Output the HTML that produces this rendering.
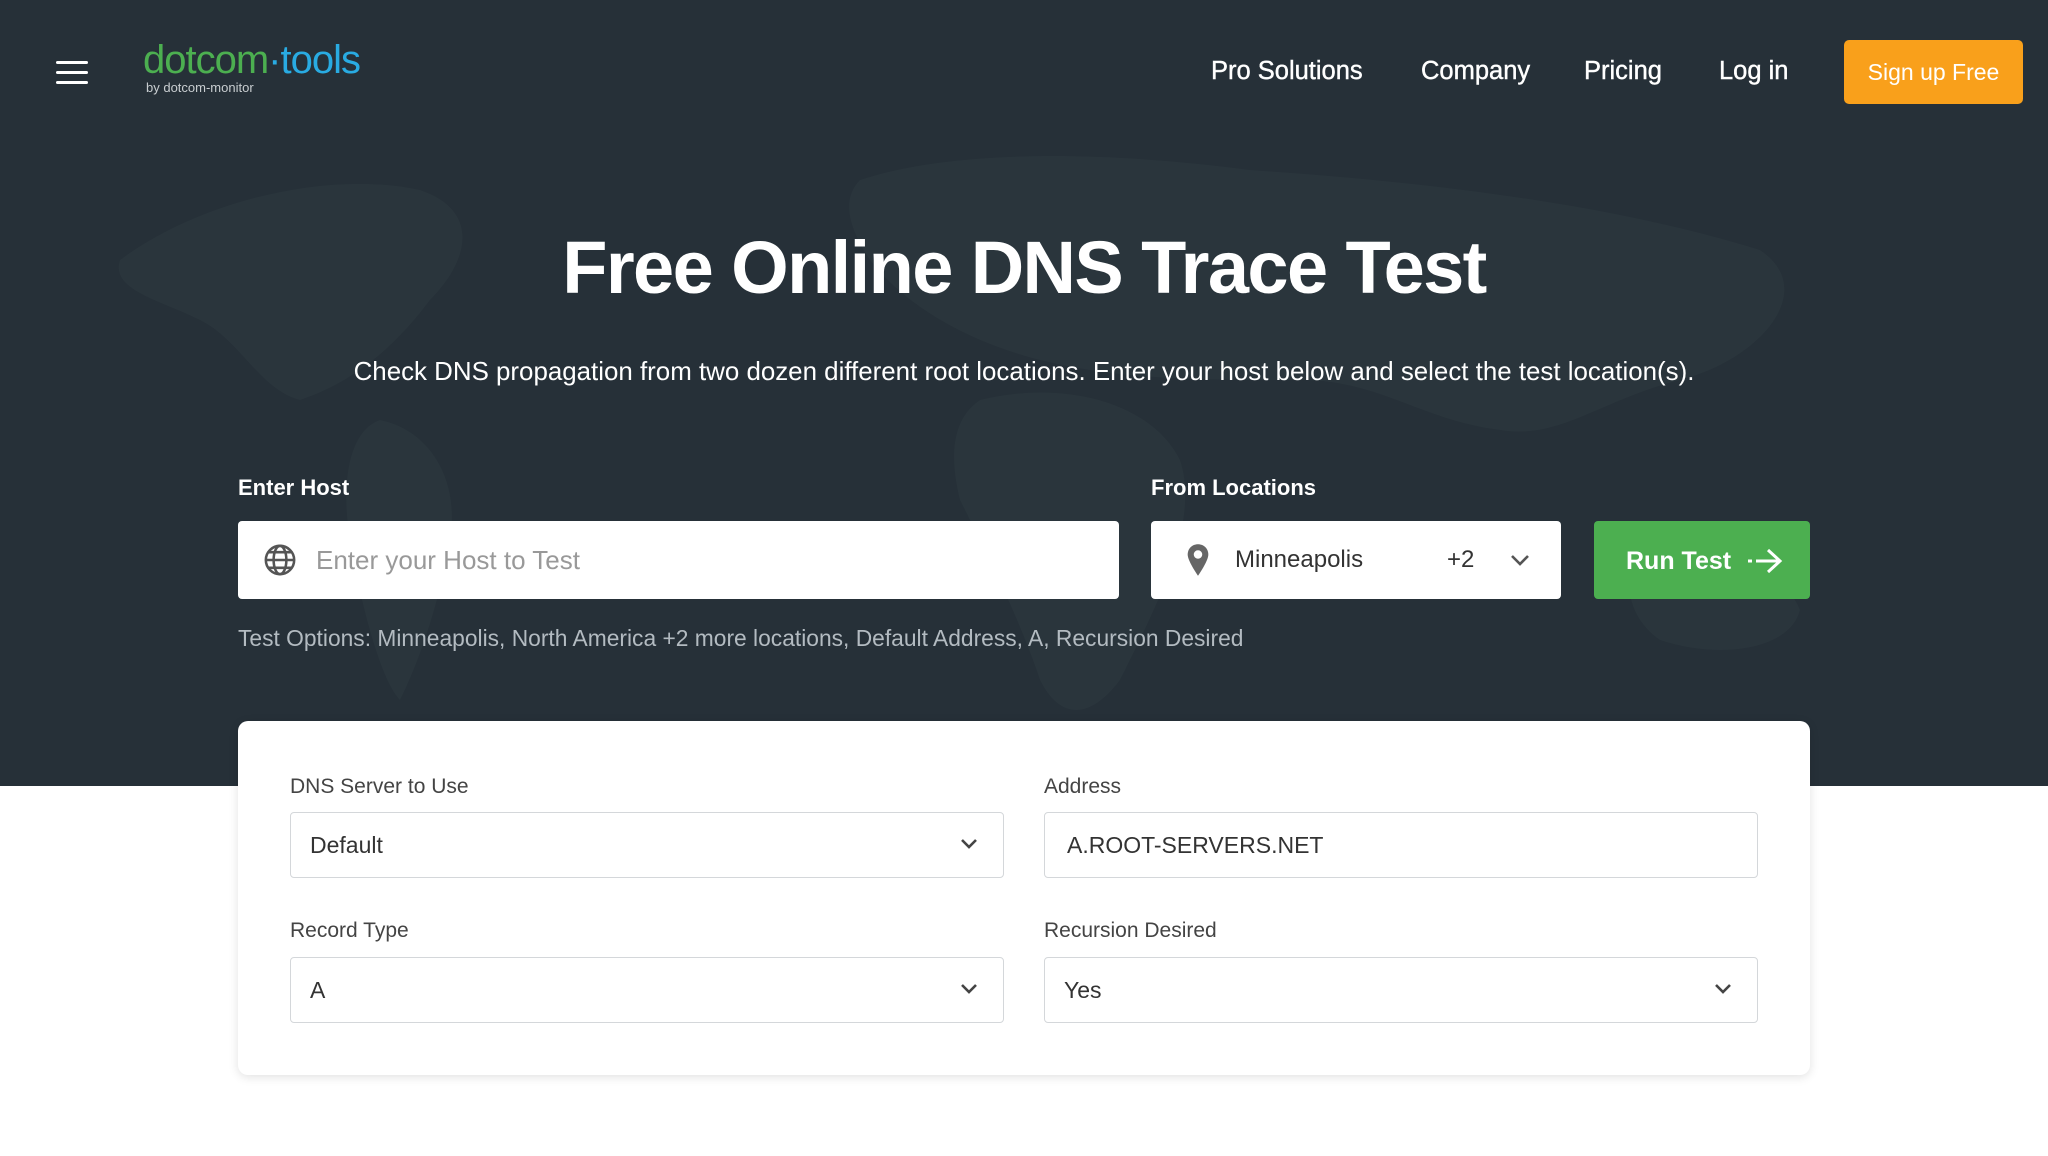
<!DOCTYPE html>
<html><head><meta charset="utf-8"><style>
*{margin:0;padding:0;box-sizing:border-box}
body{width:2048px;height:1156px;overflow:hidden;background:#fff;font-family:"Liberation Sans",Arial,sans-serif;position:relative}
.hero{position:absolute;left:0;top:0;width:2048px;height:786px;background:#263038}
.map{position:absolute;left:0;top:0;width:2048px;height:786px}
.abs{position:absolute}
.nav{color:#fff;font-size:25.5px;top:57px;-webkit-text-stroke:0.4px #fff}
.lbl{color:#fff;font-weight:bold;font-size:22px;top:475px}
.box{background:#fff;border-radius:4px}
.card{left:238px;top:721px;width:1572px;height:354px;background:#fff;border-radius:10px;box-shadow:0 2px 10px rgba(0,0,0,.12)}
.fl{color:#444;font-size:21px}
.fi{position:absolute;border:1px solid #d4d7da;border-radius:4px;height:66px;font-size:23px;color:#333;padding-left:19px;line-height:64px}
.chev{position:absolute;right:24px;top:24px}
</style></head><body>
<div class="hero">
<svg class="map" viewBox="0 0 2048 786">
<g fill="#2a353c">
<path d="M120 260 C200 200 330 170 420 190 C480 210 470 260 430 300 C400 340 360 380 300 400 C260 390 240 340 200 320 C160 300 110 290 120 260Z"/>
<path d="M380 420 C430 430 460 480 450 540 C440 600 420 660 400 700 C380 680 360 600 350 540 C340 480 350 430 380 420Z"/>
<path d="M860 180 C950 150 1100 150 1250 170 C1400 180 1600 200 1760 250 C1820 290 1760 360 1680 380 C1600 400 1560 440 1500 430 C1420 420 1380 380 1300 380 C1200 380 1120 380 1040 360 C960 340 900 300 870 260 C850 230 840 200 860 180Z"/>
<path d="M980 400 C1060 380 1150 400 1180 460 C1200 520 1160 600 1120 680 C1090 720 1060 720 1040 680 C1020 620 990 560 960 500 C950 460 950 420 980 400Z"/>
<path d="M1640 560 C1700 540 1780 560 1800 610 C1790 650 1720 660 1660 640 C1630 620 1620 580 1640 560Z"/>
</g></svg>
<div class="abs" style="left:56px;top:61px;width:32px;height:3px;background:#fff;border-radius:2px"></div>
<div class="abs" style="left:56px;top:71px;width:32px;height:3px;background:#fff;border-radius:2px"></div>
<div class="abs" style="left:56px;top:81px;width:32px;height:3px;background:#fff;border-radius:2px"></div>
<div class="abs" style="left:143px;top:36px;font-size:40px;letter-spacing:-1px;line-height:48px"><span style="color:#4caf50">dotcom</span><span style="color:#29abe2">·tools</span></div>
<div class="abs" style="left:146px;top:80px;font-size:13px;color:#c8cdd0">by dotcom-monitor</div>
<div class="abs nav" style="left:1211px">Pro Solutions</div>
<div class="abs nav" style="left:1421px">Company</div>
<div class="abs nav" style="left:1584px">Pricing</div>
<div class="abs nav" style="left:1719px">Log in</div>
<div class="abs" style="left:1844px;top:40px;width:179px;height:64px;background:#f9a01b;border-radius:5px;color:#fff;font-size:23px;text-align:center;line-height:64px">Sign up Free</div>
<div class="abs" style="left:0;width:2048px;top:222px;text-align:center;color:#fff;font-weight:bold;font-size:74px;letter-spacing:-1.6px;line-height:92px">Free Online DNS Trace Test</div>
<div class="abs" style="left:0;width:2048px;top:358px;text-align:center;color:#fff;font-size:25.9px">Check DNS propagation from two dozen different root locations. Enter your host below and select the test location(s).</div>
<div class="abs lbl" style="left:238px">Enter Host</div>
<div class="abs lbl" style="left:1151px">From Locations</div>
<div class="abs box" style="left:238px;top:521px;width:881px;height:78px">
<svg class="abs" style="left:25px;top:22px" width="34" height="34" viewBox="0 0 24 24" fill="none" stroke="#555" stroke-width="1.8"><circle cx="12" cy="12" r="10"/><ellipse cx="12" cy="12" rx="4.5" ry="10"/><path d="M2 12h20M4 6.5h16M4 17.5h16"/></svg>
<div class="abs" style="left:78px;top:24px;font-size:26px;color:#999">Enter your Host to Test</div></div>
<div class="abs box" style="left:1151px;top:521px;width:410px;height:78px">
<svg class="abs" style="left:34px;top:22px" width="26" height="34" viewBox="0 0 20 28"><path d="M10 1C5 1 1.5 4.8 1.5 9.5 1.5 15 10 27 10 27s8.5-12 8.5-17.5C18.5 4.8 15 1 10 1z" fill="#666"/><circle cx="10" cy="9.5" r="3.5" fill="#fff"/></svg>
<div class="abs" style="left:84px;top:25px;font-size:24px;color:#333">Minneapolis</div>
<div class="abs" style="left:296px;top:25px;font-size:24px;color:#333">+2</div>
<svg class="abs" style="left:358px;top:31px" width="22" height="16" viewBox="0 0 22 16"><path d="M3 4l8 8 8-8" fill="none" stroke="#555" stroke-width="2.6"/></svg></div>
<div class="abs" style="left:1594px;top:521px;width:216px;height:78px;background:#4caf50;border-radius:4px;color:#fff;font-size:25px;font-weight:bold;line-height:80px;padding-left:32px">Run Test
<svg class="abs" style="left:152px;top:25px" width="38" height="30" viewBox="0 0 38 30"><path d="M2 15h4M10 15h24M22 4l12 11-12 11" fill="none" stroke="#fff" stroke-width="3"/></svg></div>
<div class="abs" style="left:238px;top:625px;font-size:22.8px;color:#b3bbc1">Test Options: Minneapolis, North America +2 more locations, Default Address, A, Recursion Desired</div>
</div>
<div class="abs card">
<div class="abs fl" style="left:52px;top:54px">DNS Server to Use</div>
<div class="fi" style="left:52px;top:91px;width:714px">Default<svg class="chev" width="20" height="14" viewBox="0 0 20 14"><path d="M3 3l7 7 7-7" fill="none" stroke="#444" stroke-width="2.6"/></svg></div>
<div class="abs fl" style="left:806px;top:54px">Address</div>
<div class="fi" style="left:806px;top:91px;width:714px;padding-left:22px">A.ROOT-SERVERS.NET</div>
<div class="abs fl" style="left:52px;top:198px">Record Type</div>
<div class="fi" style="left:52px;top:236px;width:714px">A<svg class="chev" width="20" height="14" viewBox="0 0 20 14"><path d="M3 3l7 7 7-7" fill="none" stroke="#444" stroke-width="2.6"/></svg></div>
<div class="abs fl" style="left:806px;top:198px">Recursion Desired</div>
<div class="fi" style="left:806px;top:236px;width:714px">Yes<svg class="chev" width="20" height="14" viewBox="0 0 20 14"><path d="M3 3l7 7 7-7" fill="none" stroke="#444" stroke-width="2.6"/></svg></div>
</div>
</body></html>
